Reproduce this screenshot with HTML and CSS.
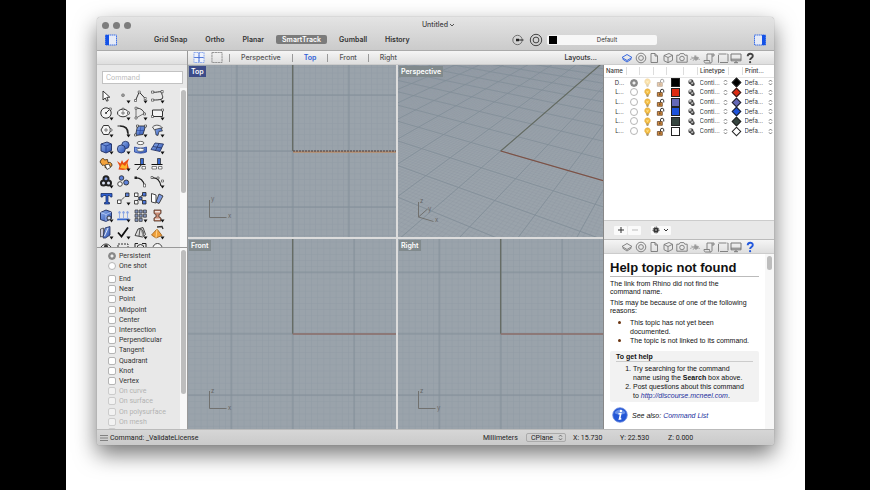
FILE: index.html
```html
<!DOCTYPE html>
<html lang="en">
<head>
<meta charset="utf-8">
<title>Untitled</title>
<link rel="stylesheet" href="styles.css">
</head>
<body>
<svg class="defs" aria-hidden="true">
  <defs>
    <linearGradient id="blue" x1="0" y1="0" x2="1" y2="1"><stop offset="0" stop-color="#8fb0ec"/><stop offset="1" stop-color="#2a4fb0"/></linearGradient>
    <radialGradient id="ball" cx=".35" cy=".3" r=".8"><stop offset="0" stop-color="#f4f4f4"/><stop offset=".45" stop-color="#555"/><stop offset="1" stop-color="#111"/></radialGradient>
    <pattern id="minorTop" width="5.6" height="5.6" patternUnits="userSpaceOnUse" x="104.7" y="86"><path class="minor" d="M0 0H5.6M0 0V5.6"/></pattern>
    <pattern id="majorTop" width="56" height="56" patternUnits="userSpaceOnUse" x="76.7" y="58"><path class="major" d="M28 0V56M0 28H56"/></pattern>
    <pattern id="minorFront" width="6.14" height="6.14" patternUnits="userSpaceOnUse" x="104.7" y="94.7"><path class="minor" d="M0 0H6.14M0 0V6.14"/></pattern>
    <pattern id="majorFront" width="61.4" height="61.4" patternUnits="userSpaceOnUse" x="74" y="64"><path class="major" d="M30.7 0V61.4M0 30.7H61.4"/></pattern>
    <symbol id="more" viewBox="0 0 17 17"><path d="M11.5 12.5h4l-2 3z" fill="#111"/></symbol>
    <symbol id="updown" viewBox="0 0 6 8"><path d="M1.2 3 3 1l1.8 2M1.2 5 3 7l1.8-2" fill="none" stroke="#555" stroke-width=".9"/></symbol>
    <symbol id="bulb" viewBox="0 0 10 10"><path d="M5 .8a3.2 3.2 0 0 1 1.8 5.8L6.500 7.500h-3L3.200 6.600A3.200 3.200 0 0 1 5 .8z" fill="#f3bd45" stroke="#dd9d26" stroke-width=".5"/><path d="M3.600 8h2.800M4 9.200h2" stroke="#8d7440" stroke-width="1"/><path d="M4 3.200l1 2 1-2" fill="none" stroke="#fff0b0" stroke-width=".7"/></symbol>
    <symbol id="lock" viewBox="0 0 10 10"><path d="M5 5V3.200a1.800 1.800 0 0 1 3.600 0V5" fill="none" stroke="#333" stroke-width="1.100"/><path d="M1.500 5h5.500v4.200H1.500z" fill="#d48a3c" stroke="#5a3c22" stroke-width=".8"/><path d="M4.300 6v2" stroke="#222" stroke-width="1"/></symbol>
    <symbol id="material" viewBox="0 0 10 10"><circle cx="4.300" cy="4.300" r="2.800" fill="url(#ball)"/><circle cx="6.300" cy="6.600" r="2.200" fill="url(#ball)"/></symbol>
    <symbol id="i-layers" viewBox="0 0 12 12"><path d="M1 5.500 6 2.500l5 3-5 3zM1.500 7 6 10l4.500-3" fill="none" stroke="currentColor" stroke-width=".9"/></symbol>
    <symbol id="i-ring" viewBox="0 0 12 12"><circle cx="6" cy="6" r="4.800" fill="none" stroke="currentColor" stroke-width=".9"/><circle cx="6" cy="6" r="2.400" fill="none" stroke="currentColor" stroke-width=".9"/></symbol>
    <symbol id="i-page" viewBox="0 0 12 12"><path d="M3 1.500h4l2.500 2.500v6.500H3zM7 1.500V4h2.500" fill="none" stroke="currentColor" stroke-width=".9"/></symbol>
    <symbol id="i-cube" viewBox="0 0 12 12"><path d="M2 3.500 7 1.500l3.500 1.800v5L6 10.700 2 8.700zM2 3.500l4 2 4.500-2.200M6 5.500v5.200" fill="none" stroke="currentColor" stroke-width=".9"/></symbol>
    <symbol id="i-camera" viewBox="0 0 12 12"><path d="M.8 3.200h2.400l1-1.600h3.600l1 1.600h2.400v7H.8z" fill="none" stroke="currentColor" stroke-width=".9"/><circle cx="6" cy="6.500" r="2.300" fill="none" stroke="currentColor" stroke-width=".9"/></symbol>
    <symbol id="i-light" viewBox="0 0 12 12"><path d="M1 7.500 5 6M2 5l9 2.500M4 9l3-6M7 9 5.500 3.500M6 4.500l3.500 1L8 8l-2.500-.5z" fill="#999" stroke="#999" stroke-width=".7"/></symbol>
    <symbol id="i-scroll" viewBox="0 0 12 12"><path d="M4 8.500V2h7v2H9M9 2v7.500c0 1-.8 1.500-1.500 1.500H2.500C1.500 11 1 10 1 8.500h5.500c0 1.500.4 2.500 1.200 2.500" fill="none" stroke="currentColor" stroke-width=".9"/></symbol>
    <symbol id="i-rect" viewBox="0 0 12 12"><path d="M1.500 2h9.500v8.500H1.500z" fill="none" stroke="currentColor" stroke-width=".9" stroke-dasharray="8 1"/></symbol>
    <symbol id="i-display" viewBox="0 0 12 12"><path d="M1 2h10v6.800H1zM1 7.200h10M4 10.700h4M6 9v1.500" fill="none" stroke="currentColor" stroke-width="1"/></symbol>
    <symbol id="i-help" viewBox="0 0 12 12"><path d="M3.700 4.300C3.700 1 8.800 1 8.800 4c0 2-2.700 2-2.700 4" fill="none" stroke="currentColor" stroke-width="1.900"/><circle cx="6.100" cy="10.200" r="1.100" fill="currentColor"/></symbol>
  </defs>
</svg>
<div class="desk">
<main class="window">
  <header class="titlebar">
    <div class="title-row">
      <div class="lights"><i></i><i></i><i></i></div>
      <h1>Untitled <svg viewBox="0 0 6 6"><path d="M1 2l2 2 2-2" fill="none" stroke="#555"/></svg></h1>
    </div>
    <div class="tool-row">
      <button class="side" aria-label="Left sidebar"><svg viewBox="0 0 12 12"><path d="M.5 1h11v10H.5z" fill="#e6ebf7" stroke="#3d70e8" stroke-dasharray="1.500 .5"/><path d="M.5 1H4v10H.5z" fill="#1552e6"/></svg></button>
      <nav class="toggles">
        <button>Grid Snap</button><button>Ortho</button><button>Planar</button><button class="on">SmartTrack</button><button>Gumball</button><button>History</button>
      </nav>
      <div class="layer-pick">
        <button aria-label="Record history"><svg viewBox="0 0 14 14"><circle cx="6.500" cy="7" r="4.700" fill="none" stroke="#666" stroke-width=".9"/><path d="M6 7h6.500" stroke="#222"/><path d="M5 5.800h3v2.400H5z" fill="#222"/></svg></button>
        <button aria-label="Material"><svg viewBox="0 0 14 14"><circle cx="7" cy="7" r="5.700" fill="none" stroke="#444"/><circle cx="7" cy="7" r="2.900" fill="none" stroke="#444"/></svg></button>
        <label class="current"><i></i><select aria-label="Current layer"><option>Default</option></select></label>
      </div>
      <button class="side" aria-label="Right sidebar"><svg viewBox="0 0 12 12"><path d="M.5 1h11v10H.5z" fill="#e6ebf7" stroke="#3d70e8" stroke-dasharray="1.500 .5"/><path d="M8 1h3.500v10H8z" fill="#1552e6"/></svg></button>
    </div>
  </header>

  <div class="body">
    <aside class="left">
      <div class="strip"></div>
      <div class="command"><input type="text" placeholder="Command" aria-label="Command"></div>
      <div class="scroller tools">
        <div class="palette">
          <button aria-label="Select"><svg viewBox="0 0 17 17"><path d="M5 3v9l2.200-2 1.500 3.200 1.500-.7L8.800 9.400l3-.2z" fill="#fff" stroke="#222" stroke-width=".9"/></svg></button>
          <button aria-label="Point"><svg viewBox="0 0 17 17"><circle cx="8" cy="7.200" r="1.500" fill="#999" stroke="#666" stroke-width=".5"/><use href="#more"/></svg></button>
          <button aria-label="Polyline"><svg viewBox="0 0 17 17"><path d="M3.500 12.500l3.700-8.500 6 6.500" fill="none" stroke="#333"/><path d="M2.500 11.500h2v2h-2zM6.200 3h2v2h-2zM12.200 9.500h2v2h-2z" fill="#fff" stroke="#333" stroke-width=".6"/><use href="#more"/></svg></button>
          <button aria-label="Curve"><svg viewBox="0 0 17 17"><path d="M4 4c3 1 6-1 9 0-1 3 2 4 0 7-3 1-5 1-9 1" fill="none" stroke="#333"/><path d="M2.500 3h2.200v2.200H2.500zM12 2.500h2.200v2.200H12zM2.500 11h2.200v2.200H2.500z" fill="#fff" stroke="#333" stroke-width=".6"/><use href="#more"/></svg></button>

          <button aria-label="Circle"><svg viewBox="0 0 17 17"><circle cx="8" cy="8" r="5.200" fill="#f5f5f5" stroke="#333"/><path d="M8 8l4-4M8 7v2M7 8h2" stroke="#333"/><path d="M11.300 3h2v2h-2z" fill="#fff" stroke="#333" stroke-width=".6"/><use href="#more"/></svg></button>
          <button aria-label="Ellipse"><svg viewBox="0 0 17 17"><ellipse cx="8" cy="8" rx="5.500" ry="3.800" fill="#f5f5f5" stroke="#333"/><path d="M7 7h2v2H7zM7.200 3.200h1.800V5H7.200zM12.500 7h2v2h-2z" fill="#fff" stroke="#333" stroke-width=".6"/><use href="#more"/></svg></button>
          <button aria-label="Arc"><svg viewBox="0 0 17 17"><path d="M4 3v10l8-4.500" fill="none" stroke="#555" stroke-width=".8"/><path d="M4 3c5 0 8 3 8.500 6" fill="none" stroke="#333"/><path d="M3 2.200h2v2H3zM3 12h2v2H3zM11.500 8h2v2h-2z" fill="#fff" stroke="#333" stroke-width=".6"/><use href="#more"/></svg></button>
          <button aria-label="Rectangle"><svg viewBox="0 0 17 17"><path d="M3.500 5h10v6.500h-10z" fill="#f5f5f5" stroke="#333"/><path d="M2.500 10.500h2v2h-2zM12.500 4h2v2h-2z" fill="#fff" stroke="#333" stroke-width=".6"/><use href="#more"/></svg></button>

          <button aria-label="Polygon"><svg viewBox="0 0 17 17"><path d="M3 8l2.500-4.500h5L13 8l-2.500 4.500h-5z" fill="#f5f5f5" stroke="#333"/><path d="M7 7h2v2H7zM12 7h2v2h-2z" fill="#fff" stroke="#333" stroke-width=".6"/><use href="#more"/></svg></button>
          <button aria-label="Fillet"><svg viewBox="0 0 17 17"><path d="M2.500 4H5M13 11v2.500" stroke="#333" stroke-width="1"/><path d="M5 4c5 0 8 2 8 7.500" fill="none" stroke="#222" stroke-width="1.700"/><use href="#more"/></svg></button>
          <button aria-label="Surface from points"><svg viewBox="0 0 17 17"><path d="M5.500 4h8l-2.500 8.500-7.500 1z" fill="url(#blue)" stroke="#222" stroke-width=".8"/><path d="M9 4 7.500 13M4.500 8.500h8" stroke="#27439b" stroke-width=".6"/><path d="M4.500 3h2v2h-2zM12.500 3h2v2h-2zM2.500 12h2v2h-2z" fill="#fff" stroke="#222" stroke-width=".6"/><use href="#more"/></svg></button>
          <button aria-label="Surface fillet"><svg viewBox="0 0 17 17"><path d="M3.500 5c3-3 8-2 10 1l-3 1-5 1z" fill="#eee" stroke="#333" stroke-width=".8"/><path d="M6 7.500l6-1.500 1.500 3-3.500.5-1 4-2-.5z" fill="url(#blue)" stroke="#222" stroke-width=".6"/><use href="#more"/></svg></button>

          <button aria-label="Box"><svg viewBox="0 0 17 17"><path d="M3 5l6-2 4.500 2v6.500L8 14l-5-2z" fill="url(#blue)" stroke="#1e2c5c" stroke-width=".9"/><path d="M3 5l5 2 5.500-2M8 7v7" fill="none" stroke="#1e3b92" stroke-width=".8"/><use href="#more"/></svg></button>
          <button aria-label="Boolean union"><svg viewBox="0 0 17 17"><circle cx="10.500" cy="6" r="3.700" fill="url(#blue)" stroke="#1e2c5c" stroke-width=".8"/><circle cx="6.300" cy="10" r="4" fill="url(#blue)" stroke="#1e2c5c" stroke-width=".8"/><use href="#more"/></svg></button>
          <button aria-label="Project curves"><svg viewBox="0 0 17 17"><ellipse cx="8.500" cy="4" rx="3.500" ry="1.600" fill="#fff" stroke="#444" stroke-width=".8"/><path d="M2.500 8c4 1.500 8 1.500 12 0v5c-4 1.500-8 1.500-12 0z" fill="url(#blue)" stroke="#27439b" stroke-width=".8"/><ellipse cx="8.500" cy="10.800" rx="3.500" ry="1.500" fill="#fff" stroke="#444" stroke-width=".6"/></svg></button>
          <button aria-label="Mesh"><svg viewBox="0 0 17 17"><path d="M6 4l8.500 1L11 12.500l-9-2z" fill="url(#blue)" stroke="#1e2c5c" stroke-width=".8"/><path d="M10 4.500 6.500 11.500M4 7.500l9 1.500" stroke="#1e2c5c" stroke-width=".7"/><use href="#more"/></svg></button>

          <button aria-label="Join"><svg viewBox="0 0 17 17"><path d="M3 4c1-2 3-2 3.500 0l3-.5.5 3c2-.5 4 .5 4 2.500s-2 2-3 1.500l-1 2-3-1c.5-2-1-3-2.500-2L3.500 8 2 6z" fill="#f2a23c" stroke="#4a3216" stroke-width=".9"/><path d="M7 9l4-1 1.500 3.500-3.500 2z" fill="#fff" stroke="#333" stroke-width=".8"/></svg></button>
          <button aria-label="Explode"><svg viewBox="0 0 17 17"><path d="M2 5l3.500 2.500L7 4l1.500 3L14 2.500 12.500 7l1.500 6-6 1-4.500-.5L4.500 10z" fill="#e94f16"/><path d="M5 12l2-4 3 2 2-3v6z" fill="#ffb52b"/><use href="#more"/></svg></button>
          <button aria-label="Trim"><svg viewBox="0 0 17 17"><path d="M8.500 2.500h3v6h-3z" fill="#3768d0" stroke="#222" stroke-width=".7"/><path d="M2.500 8.500h11" stroke="#111" stroke-width="1.200"/><path d="M5 14l5-6" stroke="#222"/><path d="M10 10.500h3.500v2.500H10z" fill="#fff" stroke="#333" stroke-width=".6"/></svg></button>
          <button aria-label="Split"><svg viewBox="0 0 17 17"><path d="M8.500 2.500h3v6h-3z" fill="#3768d0" stroke="#222" stroke-width=".7"/><path d="M2.500 8.500h11" stroke="#111" stroke-width="1.200"/><path d="M3 10.500h4.500V13H3zM9.500 10.500H13V13H9.500z" fill="#fff" stroke="#333" stroke-width=".6"/></svg></button>

          <button aria-label="Group"><svg viewBox="0 0 17 17"><circle cx="8" cy="5.800" r="3.500" fill="#222"/><circle cx="5.500" cy="10" r="3.500" fill="#222"/><circle cx="10.500" cy="10" r="3.500" fill="#222"/><circle cx="8" cy="5.800" r="1.500" fill="#7d97d8"/><circle cx="5.500" cy="10" r="1.500" fill="#dde4f5"/><circle cx="10.500" cy="10" r="1.500" fill="#dde4f5"/><use href="#more"/></svg></button>
          <button aria-label="Ungroup"><svg viewBox="0 0 17 17"><circle cx="6.500" cy="5" r="2.300" fill="#5e82da" stroke="#222" stroke-width=".8"/><circle cx="5" cy="11" r="2.300" fill="#fff" stroke="#222" stroke-width=".8"/><circle cx="11.200" cy="9.500" r="2.500" fill="#5e82da" stroke="#222" stroke-width=".8"/></svg></button>
          <button aria-label="Edit points"><svg viewBox="0 0 17 17"><path d="M3 5c5-1 9 3 9.500 8" fill="none" stroke="#222" stroke-width="1.200"/><path d="M2.500 3.500h2.500v2.500H2.500z" fill="#222"/><path d="M11.500 11h2v3h-2z" fill="#fff" stroke="#333" stroke-width=".6"/></svg></button>
          <button aria-label="Control points"><svg viewBox="0 0 17 17"><path d="M3 5c5-1 8 3 9 8" fill="none" stroke="#222" stroke-width="1.200"/><path d="M2 3.500h2v2H2zM8 4h2v2H8zM12.500 7h2v2h-2z" fill="#fff" stroke="#333" stroke-width=".6"/><use href="#more"/></svg></button>

          <button aria-label="Text"><svg viewBox="0 0 17 17"><path d="M3 3.500h11v3.500h-1.500l-1-1.500H10v7h1.500V14h-5v-1.500H8v-7H5.500l-1 1.500H3z" fill="#2f5fd0" stroke="#172d66" stroke-width=".8"/></svg></button>
          <button aria-label="Move"><svg viewBox="0 0 17 17"><path d="M5 11l7-6" stroke="#333" stroke-width="1" stroke-dasharray="2 1"/><path d="M2.500 10h3.500v3.500H2.500z" fill="#fff" stroke="#222" stroke-width=".8"/><path d="M10.500 3h3.500v3.500h-3.500z" fill="#5e82da" stroke="#222" stroke-width=".8"/><use href="#more"/></svg></button>
          <button aria-label="Copy"><svg viewBox="0 0 17 17"><path d="M4 5l8 7M11 4 4 12" stroke="#333" stroke-width=".8"/><path d="M2.500 3h3.500v3.500H2.500zM2.500 10.500h3.500V14H2.500z" fill="#f8f8f8" stroke="#222" stroke-width=".8"/><path d="M10.500 2.500H14V6h-3.500zM10.500 10.500H14V14h-3.500zM7 7h3v3H7z" fill="#4f78da" stroke="#222" stroke-width=".8"/></svg></button>
          <button aria-label="Rotate"><svg viewBox="0 0 17 17"><path d="M2.500 3.500 7 5v8l-4.500-1z" fill="#fff" stroke="#333" stroke-width=".9"/><path d="M10 4l4 2-4 7.500-3-1.500z" fill="#7d9be2" stroke="#333" stroke-width=".9"/></svg></button>

          <button aria-label="Solid tools"><svg viewBox="0 0 17 17"><path d="M2.500 5.500 8 3l5.500 2v6.500L8 14.500l-5.500-2z" fill="url(#blue)" stroke="#1e2c5c" stroke-width=".9"/><path d="M2.500 5.500 8 7.500 13.500 5M8 7.500v7" fill="none" stroke="#d9e5ff" stroke-width=".6"/><circle cx="11" cy="11" r="2" fill="#d0d8ee" stroke="#222" stroke-width=".8"/><use href="#more"/></svg></button>
          <button aria-label="Project up"><svg viewBox="0 0 17 17"><path d="M4.500 11V5M8.500 11V5M12.500 11V5M3.500 6l1-2 1 2zM7.500 6l1-2 1 2zM11.500 6l1-2 1 2z" fill="none" stroke="#7f9de2" stroke-width=".8"/><path d="M2.500 11.500h12l-1.500 1.800H2z" fill="#3768d0"/><use href="#more"/></svg></button>
          <button aria-label="Array"><svg viewBox="0 0 17 17"><path d="M3 3h3v3H3zM7.200 3h3v3h-3zM11.400 3h3v3h-3zM3 7.200h3v3H3zM7.200 7.200h3v3h-3zM11.400 7.200h3v3h-3zM3 11.400h3v3H3zM7.200 11.400h3v3h-3z" fill="#8495bd" stroke="#333" stroke-width=".7"/><use href="#more"/></svg></button>
          <button aria-label="Dimension"><svg viewBox="0 0 17 17"><path d="M5 3h7v3.500l-2 1V10l2 1v3H5v-3l2-1V7.500l-2-1z" fill="#c98b74" stroke="#4a2d20" stroke-width=".8"/><path d="M6 4h5v1.500H6zM6 11.500h5V13H6z" fill="#f0e5e0"/><use href="#more"/></svg></button>

          <button aria-label="Blocks"><svg viewBox="0 0 17 17"><path d="M2.500 5l3-1v8l-3 1z" fill="#ccd" stroke="#333" stroke-width=".7"/><path d="M7 4l5-1.500v8.500l-4.500 3H5z" fill="url(#blue)" stroke="#1e2c5c" stroke-width=".8"/><path d="M6.500 12 10 4" stroke="#fff" stroke-width=".8"/><use href="#more"/></svg></button>
          <button aria-label="Check"><svg viewBox="0 0 17 17"><path d="M3 8.500l3.500 4 6.500-9" fill="none" stroke="#111" stroke-width="1.800"/><use href="#more"/></svg></button>
          <button aria-label="Extrude"><svg viewBox="0 0 17 17"><path d="M3 11.500 6 5l5-1.500 2.500 7-3 2.500z" fill="#ddd" stroke="#333" stroke-width=".9"/><path d="M8 4.500l-1 7.500M8 5c3 0 4 3 3 7" fill="#999" stroke="#333" stroke-width=".8"/><use href="#more"/></svg></button>
          <button aria-label="Render"><svg viewBox="0 0 17 17"><path d="M8 5l5 6.500-6 2.500-4.500-3z" fill="#f0a03a" stroke="#9b5a15" stroke-width=".8"/><path d="M8 5l-1 9" stroke="#ffe0a0" stroke-width=".8"/><path d="M8 3l5-.5 1 2.500" fill="none" stroke="#333" stroke-width="1.300"/><use href="#more"/></svg></button>

          <button aria-label="Show"><svg viewBox="0 0 17 17"><path d="M3 6c3-4 7-4 10 0" fill="none" stroke="#333"/><circle cx="8" cy="5.500" r="2" fill="#333"/></svg></button>
          <button aria-label="Zoom window"><svg viewBox="0 0 17 17"><path d="M3 3h10v8H3z" fill="none" stroke="#333" stroke-dasharray="2 1"/></svg></button>
          <button aria-label="Zoom extents"><svg viewBox="0 0 17 17"><path d="M3 6V2.500h3M10 2.500h4V6" fill="none" stroke="#222"/><circle cx="8.500" cy="7" r="3.500" fill="none" stroke="#333"/></svg></button>
          <button aria-label="Zoom"><svg viewBox="0 0 17 17"><circle cx="8.500" cy="7" r="4.500" fill="#f5f5f5" stroke="#444"/></svg></button>
        </div>
        <div class="track"><i></i></div>
      </div>
      <div class="scroller snaps">
        <div class="snap-body">
          <div class="modes">
            <label><input type="radio" name="mode" checked>Persistent</label>
            <label><input type="radio" name="mode">One shot</label>
          </div>
          <div class="snap-list">
            <label><input type="checkbox">End</label>
            <label><input type="checkbox">Near</label>
            <label><input type="checkbox">Point</label>
            <label><input type="checkbox">Midpoint</label>
            <label><input type="checkbox">Center</label>
            <label><input type="checkbox">Intersection</label>
            <label><input type="checkbox">Perpendicular</label>
            <label><input type="checkbox">Tangent</label>
            <label><input type="checkbox">Quadrant</label>
            <label><input type="checkbox">Knot</label>
            <label><input type="checkbox">Vertex</label>
            <label class="off"><input type="checkbox" disabled>On curve</label>
            <label class="off"><input type="checkbox" disabled>On surface</label>
            <label class="off"><input type="checkbox" disabled>On polysurface</label>
            <label class="off"><input type="checkbox" disabled>On mesh</label>
            <label class="off"><input type="checkbox" disabled aria-label="More"></label>
          </div>
        </div>
        <div class="track"><i></i></div>
      </div>
    </aside>

    <section class="center">
      <nav class="strip tabs">
        <button aria-label="Four views"><svg viewBox="0 0 12 12"><path d="M.5.5h11v11H.5zM6 .5v11M.5 6h11" fill="#eef2fc" stroke="#7fa0ec" stroke-dasharray="2 .7"/><path d="M6 1v10M1 6h10" stroke="#3d66cf" stroke-width=".8"/></svg></button>
        <button aria-label="Single view"><svg viewBox="0 0 12 12"><path d="M.5.5h11v11H.5z" fill="none" stroke="#8a8a8a" stroke-dasharray="2.500 .5"/></svg></button>
        <hr><button>Perspective</button><hr><button class="current-tab">Top</button><hr><button>Front</button><hr><button>Right</button>
        <button class="layouts">Layouts...</button>
      </nav>
      <div class="views">
        <div class="view">
          <svg viewBox="0 0 208 172" preserveAspectRatio="xMidYMid slice">
            <path d="M0 0h208v172H0z" fill="url(#minorTop)"/><path d="M0 0h208v172H0z" fill="url(#majorTop)"/>
            <path d="M104.700 0v86" class="axis-y"/><path d="M105 87h104" stroke="#c9854f"/><path d="M105 86h104" stroke="#4c3c3c" stroke-dasharray="2 1"/>
            <path d="M21.500 135v17.500h17" class="gizmo"/><text x="23" y="136">y</text><text x="40" y="153">x</text>
          </svg>
          <h2 class="active">Top</h2>
        </div>
        <div class="view">
          <svg viewBox="0 0 205 172" preserveAspectRatio="xMidYMid slice">
            <path id="perspMinor" class="minor"/><path id="perspMajor" class="major"/>
            <path id="perspY" class="axis-y thin"/><path id="perspX" class="axis-x thin"/>
            <path d="M20.500 137v15l15 4.500M20.500 152l9-8" class="gizmo"/><text x="22" y="138">z</text><text x="30" y="146">y</text><text x="37" y="157">x</text>
          </svg>
          <h2>Perspective</h2>
        </div>
        <div class="view">
          <svg viewBox="0 0 208 190" preserveAspectRatio="xMidYMid slice">
            <path d="M0 0h208v190H0z" fill="url(#minorFront)"/><path d="M0 0h208v190H0z" fill="url(#majorFront)"/>
            <path d="M104.700 0v94.700" class="axis-y"/><path d="M104.700 95h104" class="axis-x"/>
            <path d="M21.500 152v17.500h17" class="gizmo"/><text x="23" y="154">z</text><text x="40" y="171">x</text>
          </svg>
          <h2>Front</h2>
        </div>
        <div class="view">
          <svg viewBox="0 0 205 190" preserveAspectRatio="xMidYMid slice">
            <g transform="translate(-2 0)"><path d="M0 0h210v190H0z" fill="url(#minorFront)"/><path d="M0 0h210v190H0z" fill="url(#majorFront)"/></g>
            <path d="M102.700 0v94.700" class="axis-y"/><path d="M102.700 95h104" class="axis-x"/>
            <path d="M20.500 152v17.500h17" class="gizmo"/><text x="22" y="154">z</text><text x="39" y="171">y</text>
          </svg>
          <h2>Right</h2>
        </div>
      </div>
    </section>

    <aside class="right">
      <nav class="strip panel-tabs">
        <button class="sel" aria-label="Layers"><svg><use href="#i-layers"/></svg></button><button aria-label="Properties"><svg><use href="#i-ring"/></svg></button><button aria-label="Notes"><svg><use href="#i-page"/></svg></button><button aria-label="Blocks"><svg><use href="#i-cube"/></svg></button><button aria-label="Views"><svg><use href="#i-camera"/></svg></button><button aria-label="Sun"><svg><use href="#i-light"/></svg></button><button aria-label="Script"><svg><use href="#i-scroll"/></svg></button><button aria-label="Frame"><svg><use href="#i-rect"/></svg></button><button aria-label="Display"><svg><use href="#i-display"/></svg></button><button aria-label="Help"><svg><use href="#i-help"/></svg></button>
      </nav>
      <div class="layers">
        <table>
          <thead><tr><th>Name</th><th></th><th></th><th></th><th></th><th></th><th>Linetype</th><th></th><th>Print...</th></tr></thead>
          <tbody>
            <tr class="first"><td>D...</td><td><input type="radio" name="layer" aria-label="Current" checked></td><td><svg><use href="#bulb"/></svg></td><td><svg><use href="#lock"/></svg></td><td><i class="swatch black"></i></td><td><svg><use href="#material"/></svg></td><td><select aria-label="Linetype"><option>Conti...</option></select><svg class="ud"><use href="#updown"/></svg></td><td><i class="diamond black"></i></td><td><select aria-label="Print width"><option>Defa...</option></select><svg class="ud"><use href="#updown"/></svg></td></tr>
            <tr><td>L...</td><td><input type="radio" name="layer" aria-label="Current"></td><td><svg><use href="#bulb"/></svg></td><td><svg><use href="#lock"/></svg></td><td><i class="swatch red"></i></td><td><svg><use href="#material"/></svg></td><td><select aria-label="Linetype"><option>Conti...</option></select><svg class="ud"><use href="#updown"/></svg></td><td><i class="diamond red"></i></td><td><select aria-label="Print width"><option>Defa...</option></select><svg class="ud"><use href="#updown"/></svg></td></tr>
            <tr><td>L...</td><td><input type="radio" name="layer" aria-label="Current"></td><td><svg><use href="#bulb"/></svg></td><td><svg><use href="#lock"/></svg></td><td><i class="swatch purple"></i></td><td><svg><use href="#material"/></svg></td><td><select aria-label="Linetype"><option>Conti...</option></select><svg class="ud"><use href="#updown"/></svg></td><td><i class="diamond purple"></i></td><td><select aria-label="Print width"><option>Defa...</option></select><svg class="ud"><use href="#updown"/></svg></td></tr>
            <tr><td>L...</td><td><input type="radio" name="layer" aria-label="Current"></td><td><svg><use href="#bulb"/></svg></td><td><svg><use href="#lock"/></svg></td><td><i class="swatch blue"></i></td><td><svg><use href="#material"/></svg></td><td><select aria-label="Linetype"><option>Conti...</option></select><svg class="ud"><use href="#updown"/></svg></td><td><i class="diamond blue"></i></td><td><select aria-label="Print width"><option>Defa...</option></select><svg class="ud"><use href="#updown"/></svg></td></tr>
            <tr><td>L...</td><td><input type="radio" name="layer" aria-label="Current"></td><td><svg><use href="#bulb"/></svg></td><td><svg><use href="#lock"/></svg></td><td><i class="swatch green"></i></td><td><svg><use href="#material"/></svg></td><td><select aria-label="Linetype"><option>Conti...</option></select><svg class="ud"><use href="#updown"/></svg></td><td><i class="diamond green"></i></td><td><select aria-label="Print width"><option>Defa...</option></select><svg class="ud"><use href="#updown"/></svg></td></tr>
            <tr><td>L...</td><td><input type="radio" name="layer" aria-label="Current"></td><td><svg><use href="#bulb"/></svg></td><td><svg><use href="#lock"/></svg></td><td><i class="swatch white"></i></td><td><svg><use href="#material"/></svg></td><td><select aria-label="Linetype"><option>Conti...</option></select><svg class="ud"><use href="#updown"/></svg></td><td><i class="diamond white"></i></td><td><select aria-label="Print width"><option>Defa...</option></select><svg class="ud"><use href="#updown"/></svg></td></tr>
          </tbody>
        </table>
      </div>
      <div class="layer-actions">
        <div class="pair"><button aria-label="Add layer"><svg viewBox="0 0 8 8"><path d="M1 4h6M4 1v6" stroke="#333"/></svg></button><button aria-label="Remove layer"><svg viewBox="0 0 8 8"><path d="M1 4h6" stroke="#bbb"/></svg></button></div>
        <button class="gear" aria-label="Layer options"><svg viewBox="0 0 8 8"><circle cx="4" cy="4" r="2.600" fill="#333"/><circle cx="4" cy="4" r="3" fill="none" stroke="#333" stroke-dasharray="1 1"/><circle cx="4" cy="4" r=".8" fill="#ddd"/></svg><svg viewBox="0 0 8 8"><path d="M2 3l2 2 2-2" fill="none" stroke="#333"/></svg></button>
      </div>
      <nav class="strip panel-tabs">
        <button aria-label="Layers"><svg><use href="#i-layers"/></svg></button><button aria-label="Properties"><svg><use href="#i-ring"/></svg></button><button aria-label="Notes"><svg><use href="#i-page"/></svg></button><button aria-label="Blocks"><svg><use href="#i-cube"/></svg></button><button aria-label="Views"><svg><use href="#i-camera"/></svg></button><button aria-label="Sun"><svg><use href="#i-light"/></svg></button><button aria-label="Script"><svg><use href="#i-scroll"/></svg></button><button aria-label="Frame"><svg><use href="#i-rect"/></svg></button><button aria-label="Display"><svg><use href="#i-display"/></svg></button><button class="sel" aria-label="Help"><svg><use href="#i-help"/></svg></button>
      </nav>
      <div class="scroller help">
        <article>
          <h2>Help topic not found</h2>
          <p>The link from Rhino did not find the command name.</p>
          <p>This may be because of one of the following reasons:</p>
          <ul><li>This topic has not yet been documented.</li><li>The topic is not linked to its command.</li></ul>
          <section>
            <h3>To get help</h3>
            <ol><li>Try searching for the command name using the <b>Search</b> box above.</li><li>Post questions about this command to <a href="#discourse">http://discourse.mcneel.com</a>.</li></ol>
          </section>
          <footer><svg viewBox="0 0 16 16"><circle cx="8" cy="8" r="7.300" fill="#2457d6" stroke="#7391df" stroke-width=".8"/><path d="M2.500 6a6 6 0 0 1 11 0c-3 2-8 2-11 0z" fill="#86a8f0" opacity=".7"/><path d="M6.500 6.800h2.200l-1.200 5.200 1.800-.4" fill="none" stroke="#fff" stroke-width="1.600"/><circle cx="8.900" cy="4" r="1.200" fill="#fff"/></svg><span>See also: <a href="#commands">Command List</a></span></footer>
        </article>
        <div class="track"><i></i></div>
      </div>
    </aside>
  </div>

  <footer class="status">
    <span class="prompt"><svg viewBox="0 0 8 8"><path d="M0 1.500h8M0 4h8M0 6.500h8" stroke="#777" stroke-width=".9"/></svg>Command: _ValidateLicense</span>
    <span>Millimeters</span>
    <span class="cplane"><select aria-label="Coordinates"><option>CPlane</option></select><svg class="ud"><use href="#updown"/></svg></span>
    <span>X: 15.730</span>
    <span>Y: 22.530</span>
    <span>Z: 0.000</span>
  </footer>
</main>
</div>
<script src="grid.js"></script>
</body>
</html>
```
FILE: styles.css
```css
* { box-sizing: border-box; }
body {
  margin: 0;
  padding: 0 65px 0 66px;
  background: #000;
  color: #333;
  font: 7px/10px Inter, "Liberation Sans", sans-serif;
}
button, input, select {
  margin: 0;
  padding: 0;
  border: 0;
  background: none;
  color: inherit;
  font: inherit;
  appearance: none;
}
svg { display: block; flex: none; }
h1, h2, h3, p, ul, ol, table { margin: 0; }
.defs { position: absolute; width: 0; height: 0; }

.desk {
  height: 100vh;
  min-height: 400px;
  padding: 17px 31px 45px;
  overflow: hidden;
  background: #fff;
}
.window {
  display: flex;
  flex-direction: column;
  height: 100%;
  overflow: hidden;
  border-radius: 4px 4px 3px 3px;
  background: #e8e8e8;
  box-shadow: 0 0 1px #777, 0 9px 22px rgba(0, 0, 0, .55);
}

/* Title bar */
.titlebar {
  flex: none;
  height: 34px;
  padding: 2px 8px 0 5px;
  border-bottom: 1px solid #aaa;
  background: linear-gradient(#e4e4e4, #cbcbcb);
}
.title-row { display: grid; grid-template-columns: 1fr auto 1fr; align-items: center; height: 12px; }
.title-row h1 { display: flex; align-items: center; gap: 1px; margin-left: 9px; font-size: 7px; font-weight: 500; color: #444; }
.title-row h1 svg { width: 6px; height: 6px; }
.lights { display: flex; gap: 4px; }
.lights i { width: 7px; height: 7px; border-radius: 50%; background: #7d7d7d; }
.tool-row { display: flex; align-items: center; height: 17px; padding-left: 3px; }
.side svg { width: 12px; height: 12px; }
.toggles { display: flex; gap: 6px; margin-left: 31px; font-weight: 600; }
.toggles button { height: 9px; padding: 0 6px; border-radius: 2px; line-height: 9px; }
.toggles .on { background: #7b7b7b; color: #fff; }
.layer-pick { display: flex; align-items: center; gap: 4px; margin: 0 97px 0 auto; }
.layer-pick svg { width: 14px; height: 14px; }
.current { display: flex; align-items: center; width: 110px; height: 10px; padding-left: 2px; border-radius: 2px; background: #f7f7f7; }
.current i { width: 8px; height: 8px; background: #000; }
.current select { flex: 1; height: 10px; font-size: 6px; text-align-last: center; }

/* Work area */
.body { display: flex; flex: 1; min-height: 0; }
.strip { flex: none; height: 14px; background: linear-gradient(#f5f5f5, #dedede); border-bottom: 1px solid #ccc; }
.left { display: flex; flex-direction: column; width: 91px; border-right: 1px solid #999; }
.command { padding: 6px 4px 4px 5px; }
.command input { display: block; width: 100%; height: 13px; padding: 0 3px; border: 1px solid #c2c2c2; background: #fff; }
.command input::placeholder { color: #bbb; opacity: 1; }
.scroller { display: flex; min-height: 0; overflow: hidden; }
.track { flex: none; width: 7px; padding: 2px 1px; background: #f7f7f7; }
.track i { display: block; border-radius: 3px; background: #bdbdbd; }
.tools { flex: none; height: 159px; padding-left: 1px; }
.tools .track i { height: 103px; }
.palette { flex: 1; display: grid; grid-template-columns: repeat(4, 17px); grid-auto-rows: 17px; align-content: start; }
.palette svg { width: 17px; height: 17px; }
.snaps { flex: 1; border-top: 1px solid #999; font-family: Roboto, sans-serif; }
.snaps .track i { height: 144px; }
.snap-body { flex: 1; display: flex; flex-direction: column; padding: 3px 0 0 11px; }
.snap-body label { display: flex; align-items: center; gap: 3px; line-height: 8px; white-space: nowrap; }
.snap-body .modes { margin-bottom: 3px; }
.snap-body .modes label { height: 10px; }
.snap-list { flex: 1; display: grid; grid-auto-rows: 1fr; margin-bottom: -8px; }
.off { color: #b3b3b3; }
input[type="checkbox"] { width: 8px; height: 8px; border: 1px solid #b5b5b5; border-radius: 2px; background: #fff; }
.off input[type="checkbox"] { border-color: #ccc; background: #f2f2f2; }
input[type="radio"] { flex: none; width: 8px; height: 8px; border: 1px solid #b5b5b5; border-radius: 50%; background: #fff; }
input[type="radio"]:checked { border-color: #888; background: radial-gradient(#eee 0 1px, #888 2px); }

.center { flex: 1; display: flex; flex-direction: column; min-width: 0; }
.tabs { display: flex; align-items: center; gap: 11px; padding: 0 7px 0 5px; color: #555; font-weight: 500; }
.tabs svg { width: 12px; height: 11px; }
.tabs button:first-child { margin-right: -5px; }
.tabs button:nth-child(2) { margin-right: -5px; }
.tabs hr { width: 1px; height: 8px; margin: 0; border: 0; background: #999; }
.tabs .current-tab { color: #2f5fd8; font-weight: 600; }
.tabs .layouts { margin-left: auto; color: #333; }
.views { flex: 1; display: grid; grid-template: 172fr 190fr / 208fr 205fr; gap: 2px; min-height: 0; border-right: 1px solid #888; background: #dcdcdc; }
.view { position: relative; min-height: 0; overflow: hidden; background: #9aa3ab; }
.view svg { width: 100%; height: 100%; }
.view h2 { position: absolute; top: 1px; left: 1px; padding: 0 2px; background: #818a8d; color: #fff; font-size: 7px; line-height: 11px; font-weight: 600; }
.view .active { background: #3c4b88; }
.view text { font-size: 6px; fill: #666; }
.minor { fill: none; stroke: #7c8a96; stroke-width: 1; opacity: .3; }
.major { fill: none; stroke: #828e98; stroke-width: 1; }
#perspMinor { stroke-width: .5; opacity: .25; }
#perspMajor { stroke-width: .8; }
.axis-y { fill: none; stroke: #646b62; stroke-width: 1.3; }
.axis-x { fill: none; stroke: #8d6e6a; stroke-width: 1.6; }
.thin { stroke-width: 1.2; }
#perspX { stroke: #7d5145; }
.gizmo { fill: none; stroke: #71716f; stroke-width: 1; }

/* Side panels */
.right { display: flex; flex-direction: column; width: 170px; background: #e8e8e8; }
.panel-tabs { display: grid; grid-template-columns: repeat(10, 1fr); align-items: center; justify-items: center; padding: 0 17px 0 16px; color: #777; }
.panel-tabs svg { width: 12px; height: 12px; }
.panel-tabs button:last-child { color: #444; }
.panel-tabs .sel, .panel-tabs .sel:last-child { color: #2459dd; }
.layers { flex: none; height: 156px; border-bottom: 1px solid #ccc; background: #fff; font-size: 6px; }
.layers table, .layers thead { display: block; }
.layers tr { display: grid; grid-template-columns: 23px 13px 14px 13px 17px 14px 31px 14px 1fr; align-items: center; }
.layers thead tr { height: 13px; border-bottom: 1px solid #e5e5e5; }
.layers tbody { display: grid; grid-auto-rows: 1fr; height: 58px; }
.layers th { height: 8px; padding: 0 0 0 2px; border-right: 1px solid #ddd; font-weight: 500; line-height: 8px; text-align: left; white-space: nowrap; }
.layers th:last-child { border: 0; }
.layers td { display: flex; align-items: center; justify-content: center; padding: 0; line-height: 8px; }
.layers td:first-child { padding-left: 8px; }
.layers svg { width: 9px; height: 9px; }
.layers .ud, .ud { width: 5px; height: 7px; }
.layers select { width: 23px; height: 8px; }
.first td:nth-child(3) svg, .first td:nth-child(4) svg { opacity: .45; }
.swatch { width: 9px; height: 9px; border: 1px solid #222; }
.diamond { width: 7px; height: 7px; border: 1px solid #222; transform: rotate(45deg); }
.black { background: #000; }
.red { background: #dd2a12; }
.purple { background: #6468b8; }
.blue { background: #1d53dc; }
.green { background: #36453f; }
.white { background: #fff; }
.layer-actions { flex: none; display: flex; align-items: center; gap: 10px; height: 19px; padding-left: 10px; border-bottom: 1px solid #bbb; }
.layer-actions svg { width: 8px; height: 8px; }
.pair { display: flex; gap: 1px; }
.layer-actions button { display: flex; align-items: center; justify-content: center; width: 13px; height: 9px; border-radius: 1px; background: #fafafa; }
.layer-actions .gear { width: 20px; gap: 2px; }
.help { flex: 1; background: #fff; color: #111; font: 7px/9px "Liberation Sans", Arial, sans-serif; }
.help article { flex: 1; padding: 5px 6px 0; }
.help .track { width: 9px; padding: 2px; }
.help .track i { height: 14px; }
.help h2 { margin-bottom: 3px; border-bottom: 1px solid #bbb; font-size: 13px; line-height: 17px; white-space: nowrap; }
.help p { margin-bottom: 3px; padding-right: 10px; line-height: 8px; }
.help ul { padding-left: 20px; white-space: nowrap; }
.help ul li:first-child { padding-right: 30px; white-space: normal; }
.help ul li::marker { color: #6b3410; font-size: 9px; }
.help section { margin: 6px 0 5px; padding: 2px 6px; border-radius: 2px; background: #f2f2f2; }
.help h3 { margin-bottom: 2px; border-bottom: 1px solid #ccc; font-size: 7px; line-height: 8px; }
.help ol { padding-left: 17px; }
.help ol li { padding-right: 8px; }
.help section a, .help footer { font-style: italic; }
.help a { color: #1a2c9c; text-decoration: none; }
.help footer { display: flex; align-items: center; gap: 4px; padding-left: 2px; }
.help footer svg { width: 16px; height: 16px; }

/* Status bar */
.status {
  flex: none;
  display: grid;
  grid-template-columns: 1fr 43px 47px 47px 48px 106px;
  align-items: center;
  height: 16px;
  border-top: 1px solid #bbb;
  background: linear-gradient(#d6d6d6, #cacaca);
  font-family: Roboto, sans-serif;
  color: #222;
  white-space: nowrap;
}
.prompt { display: flex; align-items: center; gap: 2px; padding-left: 3px; }
.prompt svg { width: 8px; height: 8px; }
.cplane { display: flex; align-items: center; width: 40px; height: 9px; padding: 0 2px 0 4px; border: 1px solid #aaa; border-radius: 2px; }
.cplane select { flex: 1; height: 8px; line-height: 8px; }
```
FILE: grid.js
```js
// Ground-plane grid of the perspective viewport, camera 100 units from the origin.
const center = [102.7, 86];
const focal = 3.58;

function depth(x, y) {
  return 1 - 0.00433 * x + 0.0075 * y;
}

function project(x, y) {
  const d = depth(x, y);
  const px = center[0] + focal * (0.866 * x + 0.5 * y) / d;
  const py = center[1] - focal * (-0.25 * x + 0.433 * y) / d;
  return px.toFixed(2) + " " + py.toFixed(2);
}

function lines(step) {
  let d = "";
  for (let i = -150; i <= 150; i += step) {
    d += "M" + project(i, -45) + "L" + project(i, 200);
    if (i >= -45) d += "M" + project(-200, i) + "L" + project(120, i);
  }
  return d;
}

document.getElementById("perspMinor").setAttribute("d", lines(1));
document.getElementById("perspMajor").setAttribute("d", lines(10));
document.getElementById("perspX").setAttribute("d", "M" + project(0, 0) + "L" + project(50, 0));
document.getElementById("perspY").setAttribute("d", "M" + project(0, 0) + "L" + project(0, 120));
```
